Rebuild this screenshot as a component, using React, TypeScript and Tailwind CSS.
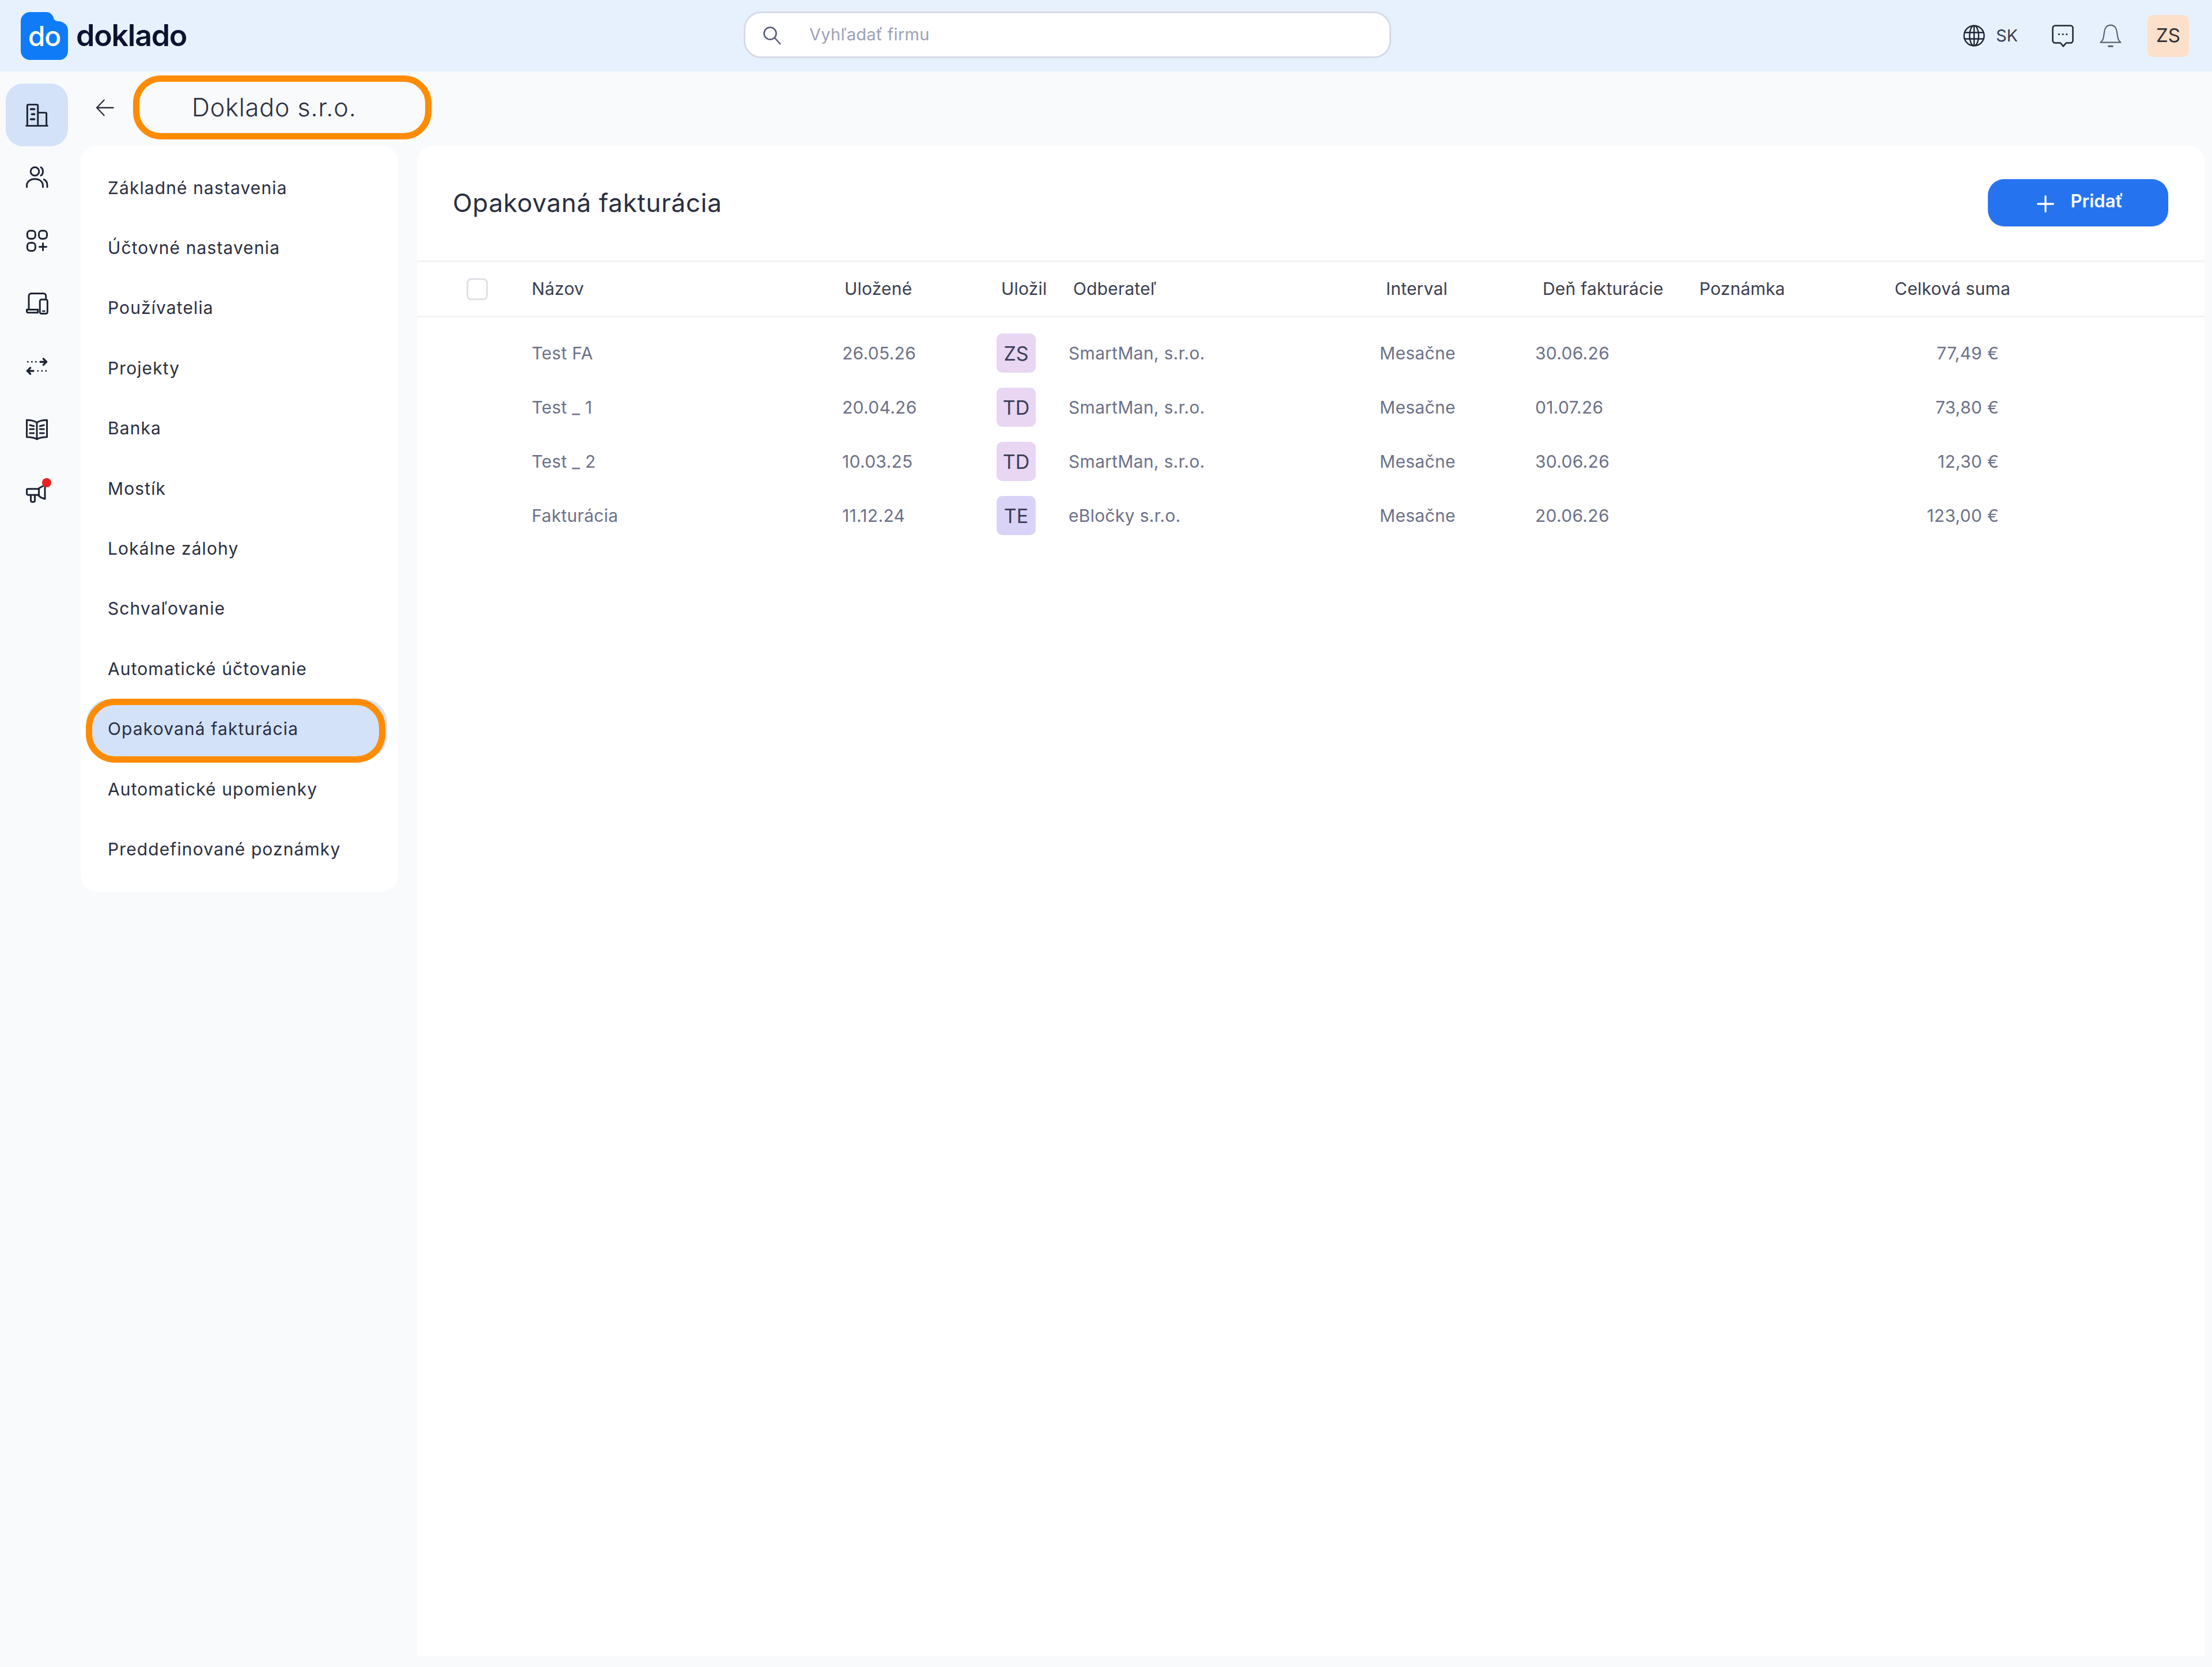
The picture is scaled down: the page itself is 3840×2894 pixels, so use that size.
import React from "react";

const font = { fontFamily: '"Inter", "Liberation Sans", sans-serif' };
const stroke = "#1d2333";

function Ico({ size = 42, sw = 1.7, color = stroke, children }: { size?: number; sw?: number; color?: string; children: React.ReactNode }) {
  return (
    <svg width={size} height={size} viewBox="0 0 24 24" fill="none" stroke={color} strokeWidth={sw} strokeLinecap="round" strokeLinejoin="round">
      {children}
    </svg>
  );
}

const sideIcons: React.ReactNode[] = [
  <Ico key="a"><path d="M1.500 22.500h21M2.500 22V2.500c0-.6.4-1 1-1h8.500c.6 0 1 .4 1 1V22M13 9.500h7.500c.6 0 1 .4 1 1V22" /><path d="M6 6h3.500M7 11h2.500M6 16h3.500" strokeWidth="2" /></Ico>,
  <Ico key="b"><circle cx="10" cy="5.500" r="4.200" /><path d="M16 1.500c2.600 1 2.600 7 0 8M2 21v-1.500C2 15.500 5.500 13 10 13s8 2.500 8 6.500V21M19 13.500c2 .8 3.300 3 3.300 6V21" /></Ico>,
  <Ico key="c"><rect x="2.500" y="2" width="8" height="8" rx="3" /><rect x="14" y="2" width="8" height="8" rx="3" /><rect x="2.500" y="14" width="8" height="8" rx="3" /><path d="M18 14.500v7M14.500 18h7" /></Ico>,
  <Ico key="d"><path d="M13 18H4V4.500C4 3.100 5 2 6.400 2h12.200C20 2 21 3.100 21 4.500V7" /><path d="M2 18h11v3H3.500C2.600 21 2 20.300 2 19.400z" /><rect x="15" y="8" width="7.500" height="14" rx="1.600" /><path d="M18 19.500h1.500" /></Ico>,
  <Ico key="e"><path d="M15.500 7.500h6M18.500 4.500l3 3-3 3" strokeWidth="2" /><path d="M8.500 16.500h-6M5.500 13.500l-3 3 3 3" strokeWidth="2" /><path d="M3 7.500h.1M7 7.500h.1M11 7.500h.1M13 16.500h.1M17 16.500h.1M21 16.500h.1" strokeWidth="1.600" /></Ico>,
  <Ico key="f"><path d="M12 22c-2.500-1.600-6-2.200-10-2.200V3c4 0 7.500.6 10 2.500C14.500 3.600 18 3 22 3v16.800c-4 0-7.500.6-10 2.200z" /><path d="M12 5.500V22M5 8l4 1M5 12h4M5 16h4M15 9l4-1M15 12h4M15 16h4" /></Ico>,
  <Ico key="g"><path d="M3 9h10l7-4v14l-4-1.500L13 15H3.500C2.700 15 2 14.300 2 13.500V10c0-.6.4-1 1-1z" /><path d="M6 15v5.500c0 1 .8 1.500 2 1.500s2-.5 2-1.500V15M14 9v6" /></Ico>,
];

const navItems = [
  "Základné nastavenia",
  "Účtovné nastavenia",
  "Používatelia",
  "Projekty",
  "Banka",
  "Mostík",
  "Lokálne zálohy",
  "Schvaľovanie",
  "Automatické účtovanie",
  "Opakovaná fakturácia",
  "Automatické upomienky",
  "Preddefinované poznámky",
];

const rows = [
  { name: "Test FA", saved: "26.05.26", by: "ZS", tone: "bg-[#e8d6f3]", customer: "SmartMan, s.r.o.", day: "30.06.26", sum: "77,49 €" },
  { name: "Test _ 1", saved: "20.04.26", by: "TD", tone: "bg-[#e8d6f3]", customer: "SmartMan, s.r.o.", day: "01.07.26", sum: "73,80 €" },
  { name: "Test _ 2", saved: "10.03.25", by: "TD", tone: "bg-[#e8d6f3]", customer: "SmartMan, s.r.o.", day: "30.06.26", sum: "12,30 €" },
  { name: "Fakturácia", saved: "11.12.24", by: "TE", tone: "bg-[#dad3f8]", customer: "eBločky s.r.o.", day: "20.06.26", sum: "123,00 €" },
];

const cols = "grid grid-cols-[199px_539px_268px_125px_540px_270px_285px_200px_340px] items-center";

export default function App() {
  return (
    <div style={font} className="w-[3840px] h-[2894px] flex flex-col bg-[#f9fafc] overflow-hidden text-[#2a2e40]">
      {/* top bar */}
      <header className="h-[124px] shrink-0 bg-[#e7f1fe] flex items-center pl-[36px] pr-[40px]">
        <div className="w-[1255px] flex items-center">
          <div className="relative w-[82px] h-[83px] flex items-center justify-center">
            <svg className="absolute inset-0" width="82" height="83" viewBox="0 0 82 83">
              <path d="M16 0H44C51 0 55 4 57 10C58.500 14 61 16 66 16C76 17 82 23 82 32V67C82 76 76 83 67 83H16C7 83 0 76 0 67V16C0 7 7 0 16 0Z" fill="#0f7bf7" />
            </svg>
            <span className="relative text-white text-[48px] font-medium tracking-[-1px] mt-[2px]">do</span>
          </div>
          <span className="ml-[14px] text-[52px] font-semibold tracking-[-1.300px] text-[#0c1230]">doklado</span>
        </div>
        <div className="w-[1124px] h-[81px] -mt-[3px] bg-white border-[3px] border-[#d6dae6] rounded-[30px] flex items-center pl-[28px]">
          <svg width="36" height="36" viewBox="0 0 24 24" fill="none" stroke="#545a72" strokeWidth="1.700" strokeLinecap="round">
            <circle cx="10" cy="10" r="7" />
            <path d="M15.500 15.500L21.500 22" />
          </svg>
          <span className="ml-[47px] text-[29px] text-[#9ca1b6] tracking-[0.300px] -mt-[1px]">Vyhľadať firmu</span>
        </div>
        <div className="flex-1 flex items-center justify-end">
          <svg width="38" height="38" viewBox="0 0 24 24" fill="none" stroke={stroke} strokeWidth="1.500">
            <circle cx="12" cy="12" r="11" />
            <ellipse cx="12" cy="12" rx="5" ry="11" />
            <path d="M1.500 8.500h21M1.500 15.500h21M12 1v22" />
          </svg>
          <span className="ml-[19px] text-[29px] text-[#3a3e50]">SK</span>
          <svg className="ml-[58px]" width="40" height="40" viewBox="0 0 24 24" fill="none" stroke={stroke} strokeWidth="1.500" strokeLinejoin="round">
            <path d="M4 1.500h16c1.400 0 2.500 1.100 2.500 2.500v13c0 1.400-1.100 2.500-2.500 2.500h-4.500L12.500 23l-3-3.500H4c-1.400 0-2.500-1.100-2.500-2.500V4c0-1.400 1.100-2.500 2.500-2.500z" />
            <path d="M8 10.500h.1M12 10.500h.1M16 10.500h.1" strokeWidth="1.800" strokeLinecap="round" />
          </svg>
          <svg className="ml-[43px]" width="40" height="42" viewBox="0 0 24 24" fill="none" stroke="#5b6074" strokeWidth="1.300" strokeLinecap="round" strokeLinejoin="round">
            <path d="M12 1C8 1 5.800 4 5.500 8L4.500 14C4.200 16 3 17.500 1.500 19H22.500C21 17.500 19.800 16 19.500 14L18.500 8C18.200 4 16 1 12 1Z" />
            <path d="M10 23h4" strokeWidth="1.800" />
          </svg>
          <div className="ml-[44px] w-[72px] h-[73px] rounded-[10px] bg-[#fde0c9] flex items-center justify-center text-[33px] text-[#2f2f38]">ZS</div>
        </div>
      </header>

      <div className="flex-1 flex min-h-0 pr-[13px] pb-[19px]">
        {/* icon rail */}
        <aside className="w-[130px] shrink-0 pl-[10px] pt-[21px]">
          {sideIcons.map((icon, i) => (
            <div key={i} className={`relative w-[108px] h-[109px] flex items-center justify-center ${i === 0 ? "bg-[#d3e2f9] rounded-[30px]" : ""}`}>
              {icon}
              {i === 6 && <span className="absolute left-[63px] top-[31px] w-[16px] h-[16px] rounded-full bg-[#e8211f]" />}
            </div>
          ))}
        </aside>

        <div className="flex-1 flex flex-col min-w-0 pl-[10px]">
          {/* title row */}
          <div className="h-[129px] shrink-0 flex items-start pt-[7px]">
            <div className="h-[111px] w-[91px] pl-[26px] flex items-center">
              <svg width="32" height="32" viewBox="0 0 24 24" fill="none" stroke="#2a2e40" strokeWidth="1.700" strokeLinecap="round" strokeLinejoin="round">
                <path d="M23 12H1.500M11 2L1.500 12 11 22" />
              </svg>
            </div>
            <div className="h-[111px] w-[518px] border-[11px] border-[#ff8c00] rounded-[48px] pl-[91px] flex items-center">
              <span className="text-[43px] font-light tracking-[0.900px] text-[#2a2e40]">Doklado s.r.o.</span>
            </div>
          </div>

          <div className="flex-1 flex min-h-0 gap-[33px]">
            {/* settings menu */}
            <nav className="w-[551px] h-[1295px] shrink-0 bg-white rounded-[28px] py-[21px] pl-[10px] pr-[19px]">
              {navItems.map((label, i) => {
                const active = label === "Opakovaná fakturácia";
                return (
                  <div key={label} className={`relative h-[104.400px] pl-[37px] flex items-center text-[30px] tracking-[1.100px] ${active ? "bg-[#d3e2f9] rounded-[40px]" : ""}`}>
                    {active && <span className="absolute -left-px -top-px w-[520px] h-[111px] border-[11px] border-[#ff8c00] rounded-[50px]" />}
                    <span className="relative">{label}</span>
                  </div>
                );
              })}
            </nav>

            {/* content */}
            <main className="flex-1 min-w-0 bg-white rounded-t-[28px]">
              <div className="h-[202px] pb-[2px] border-b-[3px] border-[#f1f2f4] pl-[62px] pr-[63px] flex items-center justify-between">
                <h1 className="text-[44px] font-normal tracking-[0.700px] text-[#2a2e40]">Opakovaná fakturácia</h1>
                <button className="w-[313px] h-[82px] pl-[5px] rounded-[28px] bg-[#2673f0] text-white flex items-center justify-center shadow-sm">
                  <svg className="mr-[28px] mt-[4px]" width="32" height="32" viewBox="0 0 24 24" fill="none" stroke="white" strokeWidth="2.500" strokeLinecap="round">
                    <path d="M12 2v20M2 12h20" />
                  </svg>
                  <span className="text-[31px] font-semibold -mt-[4px]">Pridať</span>
                </button>
              </div>
              <div className={`${cols} h-[96px] border-b-[3px] border-[#f1f2f4] text-[30px] tracking-[0.200px] text-[#3a3e50]`}>
                <div className="pl-[86px]">
                  <div className="w-[37px] h-[38px] rounded-[8px] bg-white border-[3px] border-[#dfe2e8]" />
                </div>
                <div>Názov</div>
                <div className="pl-[4px]">Uložené</div>
                <div className="pl-[8px] whitespace-nowrap">Uložil</div>
                <div className="pl-[8px]">Odberateľ</div>
                <div className="pl-[11px]">Interval</div>
                <div className="pl-[13px] whitespace-nowrap">Deň fakturácie</div>
                <div>Poznámka</div>
                <div className="text-right">Celková suma</div>
              </div>
              <div className="pt-[15px]">
                {rows.map((r) => (
                  <div key={r.name} className={`${cols} h-[94px] text-[30px] tracking-[0.300px] text-[#6c7188]`}>
                    <div />
                    <div>{r.name}</div>
                    <div>{r.saved}</div>
                    <div>
                      <div className={`w-[68px] h-[68px] rounded-[10px] ${r.tone} flex items-center justify-center text-[34px] tracking-normal text-[#3a3e55]`}>{r.by}</div>
                    </div>
                    <div>{r.customer}</div>
                    <div>Mesačne</div>
                    <div>{r.day}</div>
                    <div />
                    <div className="text-right pr-[20px]">{r.sum}</div>
                  </div>
                ))}
              </div>
            </main>
          </div>
        </div>
      </div>
    </div>
  );
}
